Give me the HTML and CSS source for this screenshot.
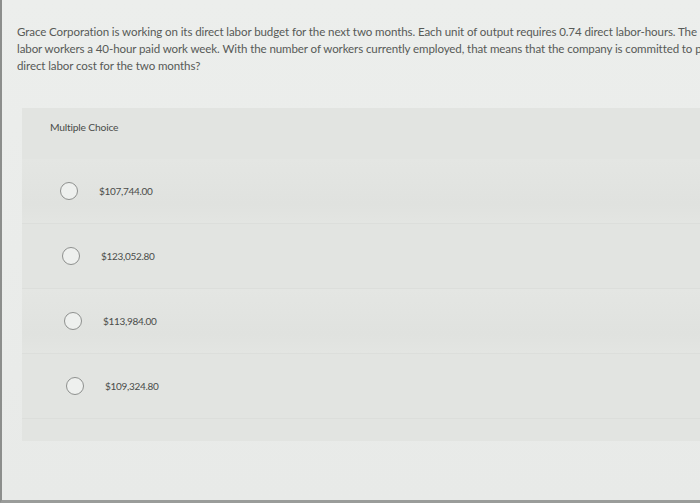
FILE: index.html
```html
<!DOCTYPE html>
<html>
<head>
<meta charset="utf-8">
<link rel="stylesheet" href="styles.css">
</head>
<body>
<div class="screen">
  <div class="question">
    <p class="line">Grace Corporation is working on its direct labor budget for the next two months. Each unit of output requires 0.74 direct labor-hours. The</p>
    <p class="line">labor workers a 40-hour paid work week. With the number of workers currently employed, that means that the company is committed to paying</p>
    <p class="line">direct labor cost for the two months?</p>
  </div>
  <div class="panel">
    <div class="mc-label">Multiple Choice</div>
    <ul class="options">
      <li class="option"><span class="radio"></span><span class="amount">$107,744.00</span></li>
      <li class="option shift1"><span class="radio"></span><span class="amount">$123,052.80</span></li>
      <li class="option shift2"><span class="radio"></span><span class="amount">$113,984.00</span></li>
      <li class="option shift3"><span class="radio"></span><span class="amount">$109,324.80</span></li>
    </ul>
  </div>
  <div class="footer"></div>
</div>
</body>
</html>
```

FILE: styles.css
```css
html, body {
  margin: 0;
  padding: 0;
  width: 700px;
  height: 503px;
  overflow: hidden;
}
body {
  background: #e9ebe9;
  font-family: Lato, "Open Sans", sans-serif;
}
.screen {
  height: 503px;
  border-left: 2px solid #8c8e8c;
  border-bottom: 3px solid #9a9c9a;
  box-sizing: border-box;
  background: linear-gradient(180deg, #eceeec 0%, #e8eae8 100%);
  display: flex;
  flex-direction: column;
}
.question {
  padding: 23px 0 0 15px;
  height: 108px;
  box-sizing: border-box;
}
.line {
  margin: 0;
  font-size: 11.55px;
  line-height: 17px;
  color: #575a57;
  white-space: nowrap;
  overflow: hidden;
  letter-spacing: -0.1px;
}
.panel {
  margin-left: 20px;
  height: 333px;
  background: #e2e4e1;
  box-sizing: border-box;
  padding: 13px 0 0 0;
}
.mc-label {
  padding-left: 28px;
  font-size: 10.3px;
  line-height: 12px;
  color: #4a4c4a;
  letter-spacing: -0.2px;
}
.options {
  list-style: none;
  margin: 43px 0 0 0;
  padding: 0;
}
.option {
  display: flex;
  align-items: center;
  height: 64px;
  margin-top: -17px;
  padding-left: 38px;
  gap: 21px;
  border-bottom: 1px solid #dcdedb;
}
.option + .option {
  margin-top: 0;
}
.option:nth-child(odd) {
  background: linear-gradient(180deg, #e4e6e3 0%, #e0e2df 70%, #e3e5e2 100%);
}
.shift1 { padding-left: 40px; }
.shift2 { padding-left: 42px; }
.shift3 { padding-left: 44px; }
.radio {
  width: 16px;
  height: 16px;
  border: 1.5px solid #8e908e;
  border-radius: 50%;
  background: #eef0ee;
  flex: none;
}
.amount {
  font-size: 10px;
  color: #4a4c4a;
  letter-spacing: -0.3px;
}
.footer {
  flex: 1;
}
```
